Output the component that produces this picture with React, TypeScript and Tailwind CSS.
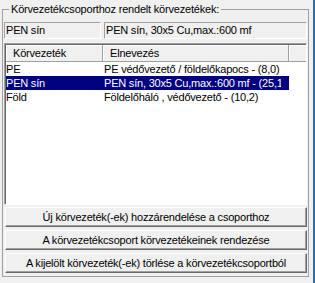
const rows = [
  { code: "PE", name: "PE védővezető / földelőkapocs - (8,0)", selected: false },
  { code: "PEN sín", name: "PEN sín, 30x5 Cu,max.:600 mf - (25,1)", selected: true },
  { code: "Föld", name: "Földelőháló , védővezető - (10,2)", selected: false },
]

const buttons = [
  "Új körvezeték(-ek) hozzárendelése a csoporthoz",
  "A körvezetékcsoport körvezetékeinek rendezése",
  "A kijelölt körvezeték(-ek) törlése a körvezetékcsoportból",
]

export default function App() {
  return (
    <div className="w-[315px] h-[283px] bg-[#f0f0f0] flex font-['Liberation_Sans',Arial,sans-serif] text-[11px] tracking-[-0.2px] leading-[14px] text-black overflow-hidden">
      <div className="w-[313px] pl-[2px]">
        <fieldset className="w-[307px] h-[275px] mt-[2px] border border-[#a0a0a0] px-[1px] pt-[5px] pb-[3px] flex flex-col">
          <legend className="ml-[5px] px-[2px] leading-[15px]">Körvezetékcsoporthoz rendelt körvezetékek:</legend>
          <div className="flex gap-[3px] h-[17px]">
            <div className="w-[97px] border border-t-[#a0a0a0] border-l-[#a0a0a0] border-r-white border-b-white px-[1px] leading-[15px] whitespace-nowrap overflow-hidden">
              PEN sín
            </div>
            <div className="flex-1 border border-t-[#a0a0a0] border-l-[#a0a0a0] border-r-white border-b-white px-[1px] leading-[15px] whitespace-nowrap overflow-hidden">
              PEN sín, 30x5 Cu,max.:600 mf
            </div>
          </div>

          <div className="mt-[4px] h-[165px] border border-t-[#a0a0a0] border-l-[#a0a0a0] border-r-white border-b-white shadow-[inset_1px_1px_0_#696969] bg-white pl-[1px] pt-[1px] overflow-hidden">
            <div className="flex h-[17px] bg-[#f0f0f0]">
              <div className="w-[97px] border-r border-b border-[#a0a0a0] shadow-[inset_1px_1px_0_#fff] pl-[7px] leading-[16px] whitespace-nowrap">Körvezeték</div>
              <div className="w-[186px] border-r border-b border-[#a0a0a0] shadow-[inset_1px_1px_0_#fff] pl-[7px] leading-[16px] whitespace-nowrap">Elnevezés</div>
              <div className="flex-1 border-b border-[#a0a0a0] shadow-[inset_1px_1px_0_#fff]"></div>
            </div>
            {rows.map((r) => (
              <div key={r.code} className="flex h-[14px]">
                <div className={`w-[283px] flex ${r.selected ? "bg-[#000080] text-white" : ""}`}>
                  <div className="w-[98px] whitespace-nowrap overflow-hidden">{r.code}</div>
                  <div className="w-[177px] whitespace-nowrap overflow-hidden">{r.name}</div>
                </div>
              </div>
            ))}
          </div>

          <div className="mt-[2px] flex flex-col gap-[3px]">
            {buttons.map((b) => (
              <button
                key={b}
                className="h-[20px] ml-[1px] bg-[#f0f0f0] border border-t-white border-l-white border-r-[#696969] border-b-[#696969] shadow-[inset_-1px_-1px_0_#a0a0a0] text-center whitespace-nowrap"
              >
                {b}
              </button>
            ))}
          </div>
        </fieldset>
      </div>
      <div className="w-[2px] h-full bg-[#2f6db5]"></div>
    </div>
  )
}
